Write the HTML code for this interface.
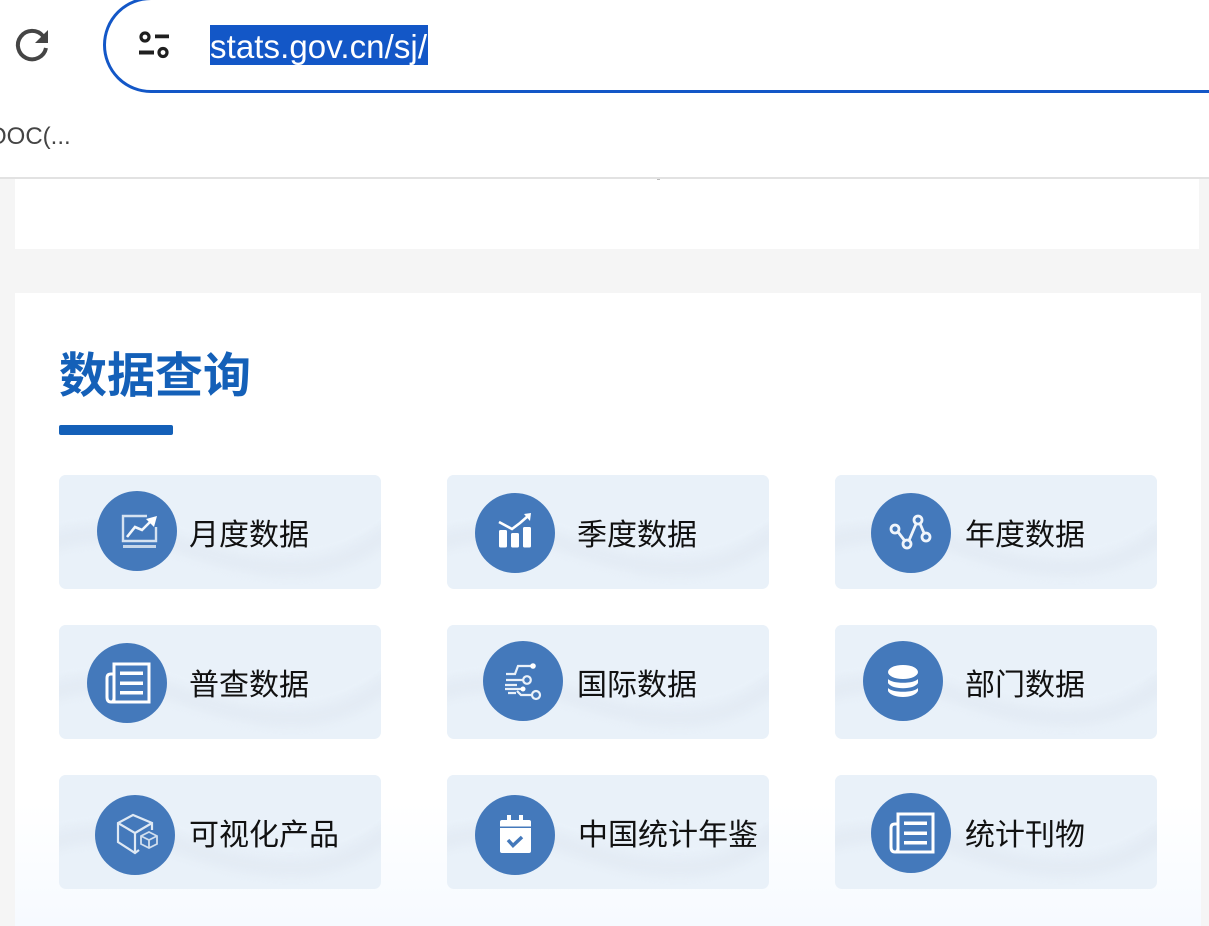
<!DOCTYPE html>
<html lang="zh">
<head>
<meta charset="utf-8">
<style>
html,body{margin:0;padding:0;width:1209px;height:926px;overflow:hidden;background:#f5f5f5;font-family:"Liberation Sans","Noto Sans CJK SC",sans-serif}
.abs{position:absolute}
#bar{left:0;top:0;width:1209px;height:177px;background:#fff;overflow:hidden}
#line{left:0;top:177px;width:1209px;height:2px;background:#e2e2e2}
#pill{left:103px;top:-3px;width:1300px;height:90px;border:3px solid #1357c7;border-radius:48px;background:#fff}
#url{left:210px;top:25px;width:218px;height:40px;background:#1357c7;color:#fff;font-size:33px;line-height:43px;white-space:nowrap;overflow:hidden}
#doc{left:-12px;top:122px;font-size:24px;line-height:30px;color:#444;white-space:nowrap}
#p1{left:15px;top:179px;width:1184px;height:70px;background:#fff}
#p2{left:15px;top:293px;width:1186px;height:633px;background:linear-gradient(#fff 0,#fff 510px,#f6faff 633px)}
#title{left:59px;top:346px;font-size:48px;line-height:62px;font-weight:700;color:#1460b8;white-space:nowrap}
#ul{left:59px;top:425px;width:114px;height:10px;background:#1460b8;border-radius:2px}
.card{position:absolute;width:322px;height:114px;border-radius:7px;background:#e9f1f9;overflow:hidden}
.card svg{position:absolute;left:0;top:0}
.t{position:absolute;font-size:30px;line-height:40px;color:#111;white-space:nowrap}
.c{position:absolute;width:80px;height:80px;border-radius:50%;background:#4479bb}
.c svg{position:absolute;left:0;top:0;filter:blur(.35px)}
</style>
</head>
<body>
<svg width="0" height="0" style="position:absolute"><defs><symbol id="wv" viewBox="0 0 322 114"><path d="M-10 68C20 58 70 52 115 68C160 84 200 96 250 92C285 88 310 72 330 56" fill="none" stroke="#dde5ef" stroke-width="18" opacity=".4" style="filter:blur(4px)"/><path d="M-10 52C20 44 70 38 115 52C160 68 200 80 250 76C285 72 310 56 330 40L330 -10L-10 -10Z" fill="#e9f1f9" style="filter:blur(1.5px)"/></symbol></defs></svg>
<div class="abs" id="bar">
  <svg class="abs" style="left:14px;top:26px" width="38" height="38" viewBox="0 0 38 38"><path d="M29 10A14.200 14.200 0 1 0 32 22" fill="none" stroke="#454545" stroke-width="4"/><path d="M34 4V17H21Z" fill="#454545"/></svg>
  <div class="abs" id="pill"></div>
  <svg class="abs" style="left:136px;top:28px" width="36" height="36" viewBox="0 0 36 36"><g fill="none" stroke="#1f1f1f" stroke-width="3.200"><circle cx="9" cy="9" r="4"/><circle cx="27" cy="24.500" r="4"/></g><path d="M19 6.500H33V10.300H19ZM3 22.500H18V26.500H3Z" fill="#1f1f1f"/></svg>
  <div class="abs" id="url"><span style="display:inline-block;letter-spacing:.08px">stats.gov.cn/sj/</span></div>
  <div class="abs" id="doc">OOC(...</div>
</div>
<div class="abs" id="line"></div>
<div class="abs" id="p1"></div>
<div class="abs" style="left:657px;top:179px;width:3px;height:1px;background:#bbb"></div>
<div class="abs" id="p2"></div>
<div class="abs" id="title">数据查询</div>
<div class="abs" id="ul"></div>

<div class="card" style="left:59px;top:475px"><svg width="322" height="114"><use href="#wv"/></svg></div>
<div class="card" style="left:447px;top:475px"><svg width="322" height="114"><use href="#wv"/></svg></div>
<div class="card" style="left:835px;top:475px"><svg width="322" height="114"><use href="#wv"/></svg></div>
<div class="card" style="left:59px;top:625px"><svg width="322" height="114"><use href="#wv"/></svg></div>
<div class="card" style="left:447px;top:625px"><svg width="322" height="114"><use href="#wv"/></svg></div>
<div class="card" style="left:835px;top:625px"><svg width="322" height="114"><use href="#wv"/></svg></div>
<div class="card" style="left:59px;top:775px"><svg width="322" height="114"><use href="#wv"/></svg></div>
<div class="card" style="left:447px;top:775px"><svg width="322" height="114"><use href="#wv"/></svg></div>
<div class="card" style="left:835px;top:775px"><svg width="322" height="114"><use href="#wv"/></svg></div>

<!-- 月度 -->
<div class="c" style="left:97px;top:491px"><svg width="80" height="80"><path d="M50 25H26V50H59V36" fill="none" stroke="#d5e2f1" stroke-width="2.400"/><path d="M26 54H59V57H26Z" fill="#c5d6ea"/><path d="M30 46L38 36L45 39L54 30" fill="none" stroke="#f3f7fb" stroke-width="2.600"/><path d="M49 28L60 25L57 36Z" fill="#fff"/></svg></div>
<div class="t" style="left:189px;top:516px">月度数据</div>
<!-- 季度 -->
<div class="c" style="left:475px;top:493px"><svg width="80" height="80"><path d="M24 29L37 36L45 30L53 23" fill="none" stroke="#fff" stroke-width="2.600"/><path d="M49 21L56 20L55 28Z" fill="#fff"/><rect x="24" y="37" width="8" height="17.500" rx="1.500" fill="#fff"/><rect x="36" y="40" width="8" height="14.500" rx="1.500" fill="#fff"/><rect x="48" y="34" width="8" height="20.500" rx="1.500" fill="#fff"/></svg></div>
<div class="t" style="left:577px;top:516px">季度数据</div>
<!-- 年度 -->
<div class="c" style="left:871px;top:493px"><svg width="80" height="80"><g fill="none" stroke="#f0f5fb" stroke-width="2.800"><circle cx="24" cy="36" r="4"/><circle cx="36" cy="51" r="4"/><circle cx="47" cy="27" r="4"/><circle cx="55" cy="44" r="4"/><path d="M27 39L33.500 47.500M38 47.500L45 31M49 30.500L53 40"/></g></svg></div>
<div class="t" style="left:965px;top:516px">年度数据</div>
<!-- 普查 -->
<div class="c" style="left:87px;top:643px"><svg width="80" height="80"><g fill="none" stroke="#fff" stroke-width="3"><path d="M27 58V21H62V59H24"/><path d="M27 31H24Q20 31 20 35V54Q20 59 24 59Q27 59 27 55"/></g><path d="M33 28.500H56V32H33ZM33 38.500H56V42H33ZM33 48H56V51.500H33Z" fill="#fff"/></svg></div>
<div class="t" style="left:189px;top:666px">普查数据</div>
<!-- 国际 -->
<div class="c" style="left:483px;top:641px"><svg width="80" height="80"><g fill="none" stroke="#eaf1f9" stroke-width="2.200"><path d="M23 33H32L35 25H50"/><path d="M23 39H40"/><circle cx="44" cy="39" r="3.800"/><path d="M22 44H34M22 48H40"/><path d="M25 52H33M34 50L38 54H49"/><circle cx="53" cy="54" r="4"/></g><circle cx="50" cy="25" r="2.800" fill="#fff"/><circle cx="40" cy="48" r="2.500" fill="#fff"/></svg></div>
<div class="t" style="left:577px;top:666px">国际数据</div>
<!-- 部门 -->
<div class="c" style="left:863px;top:641px"><svg width="80" height="80"><ellipse cx="40" cy="31" rx="15" ry="7" fill="#fff"/><path d="M25 38C29 43 51 43 55 38V42C51 49 29 49 25 42Z" fill="#fff"/><path d="M25 47C29 52 51 52 55 47V50C51 58 29 58 25 50Z" fill="#fff"/></svg></div>
<div class="t" style="left:965px;top:666px">部门数据</div>
<!-- 可视化 -->
<div class="c" style="left:95px;top:795px"><svg width="80" height="80"><g fill="none" stroke="#dfe9f4" stroke-width="2.200"><path d="M57 35V28L38 20L23 28V47L40 58L44 55"/><path d="M23 28L40 38V58M40 38L57 28"/></g><g fill="none" stroke="#d0deee" stroke-width="1.800"><path d="M46 41L54 37L62 41V49L54 53L46 49Z"/><path d="M46 41L54 45L62 41M54 45V53"/></g></svg></div>
<div class="t" style="left:189px;top:816px">可视化产品</div>
<!-- 年鉴 -->
<div class="c" style="left:475px;top:795px"><svg width="80" height="80"><path d="M27 25H32V20H36V25H44V20H48V25H54Q56 25 56 27V56Q56 58 54 58H27Q25 58 25 56V27Q25 25 27 25Z" fill="#fff"/><path d="M25 31.500H56V33H25Z" fill="#4479bb"/><path d="M33 45L38 50.500L47 42" fill="none" stroke="#4479bb" stroke-width="3.500"/></svg></div>
<div class="t" style="left:578px;top:816px">中国统计年鉴</div>
<!-- 统计刊物 -->
<div class="c" style="left:871px;top:793px"><svg width="80" height="80"><g fill="none" stroke="#fff" stroke-width="3"><path d="M27 58V21H62V59H24"/><path d="M27 31H24Q20 31 20 35V54Q20 59 24 59Q27 59 27 55"/></g><path d="M33 28.500H56V32H33ZM33 38.500H56V42H33ZM33 48H56V51.500H33Z" fill="#fff"/></svg></div>
<div class="t" style="left:965px;top:816px">统计刊物</div>
</body>
</html>
